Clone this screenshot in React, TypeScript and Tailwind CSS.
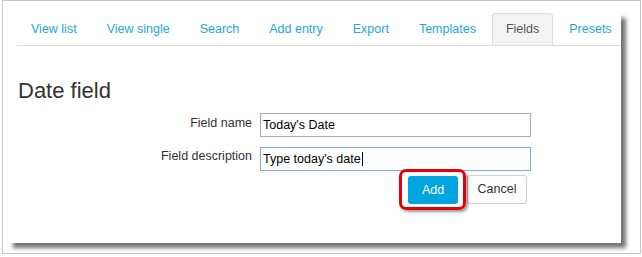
const tabs = [
  "View list",
  "View single",
  "Search",
  "Add entry",
  "Export",
  "Templates",
  "Fields",
  "Presets",
] as const;

export default function App() {
  return (
    <div className="flex h-[257px] w-[642px] bg-white pb-[3px] pl-[2px] pr-[1px] font-['Liberation_Sans',Arial,sans-serif]">
      <div className="flex-1 border border-[#c6c6c6] pl-[5px] pt-[6px]">
        <div className="h-[230px] w-[613px] bg-white shadow-[5px_5px_4px_rgba(0,0,0,0.55)]">
          <div className="ml-[9px] mt-[6px] flex gap-[2px] overflow-hidden whitespace-nowrap border-b border-[#dedede]">
            {tabs.map((tab) =>
              tab === "Fields" ? (
                <div
                  key={tab}
                  className="h-[32px] shrink-0 rounded-t-[4px] border border-b-0 border-[#dcdcdc] bg-[#f3f3f3] px-[13px] text-[12.5px] leading-[31px] text-[#555]"
                >
                  {tab}
                </div>
              ) : (
                <div
                  key={tab}
                  className="h-[32px] shrink-0 px-[14px] text-[12.5px] leading-[32px] text-[#27a4de]"
                >
                  {tab}
                </div>
              )
            )}
          </div>

          <h2 className="ml-[10px] mt-[32px] text-[22px] leading-[26px] text-[#333]">
            Date field
          </h2>

          <div className="mt-[9px]">
            <div className="flex items-start gap-[8px]">
              <div className="w-[244px] pt-px text-right text-[12.5px] leading-[18px] text-[#333]">
                Field name
              </div>
              <div className="h-[24px] w-[271px] border border-[#a9a9a9] px-[2px] text-[12.5px] leading-[22px] text-black">
                Today's Date
              </div>
            </div>
            <div className="mt-[10px] flex items-start gap-[8px]">
              <div className="w-[244px] text-right text-[12.5px] leading-[18px] text-[#333]">
                Field description
              </div>
              <div className="h-[24px] w-[271px] border border-[#7eaae6] px-[2px] text-[12.5px] leading-[22px] text-black">
                Type today's date
                <span className="ml-px inline-block h-[14px] w-px bg-black align-[-3px]" />
              </div>
            </div>
            <div className="ml-[400px] mt-[5px] flex items-start">
              <div className="relative">
                <span className="absolute -bottom-[6px] -left-[9px] -right-[8px] -top-[7px] rounded-[7px] border-[3px] border-[#e6000a] shadow-[2px_2px_3px_rgba(0,0,0,0.4)]" />
                <div className="relative flex h-[28px] w-[50px] items-center justify-center rounded-[3px] bg-[#00a4df] text-[12.5px] text-white">
                  Add
                </div>
              </div>
              <div className="-mt-px ml-[9px] flex h-[29px] w-[60px] items-center justify-center rounded-[3px] border border-[#d0d0d0] bg-white text-[12.5px] text-[#333]">
                Cancel
              </div>
            </div>
          </div>
        </div>
      </div>
    </div>
  );
}
